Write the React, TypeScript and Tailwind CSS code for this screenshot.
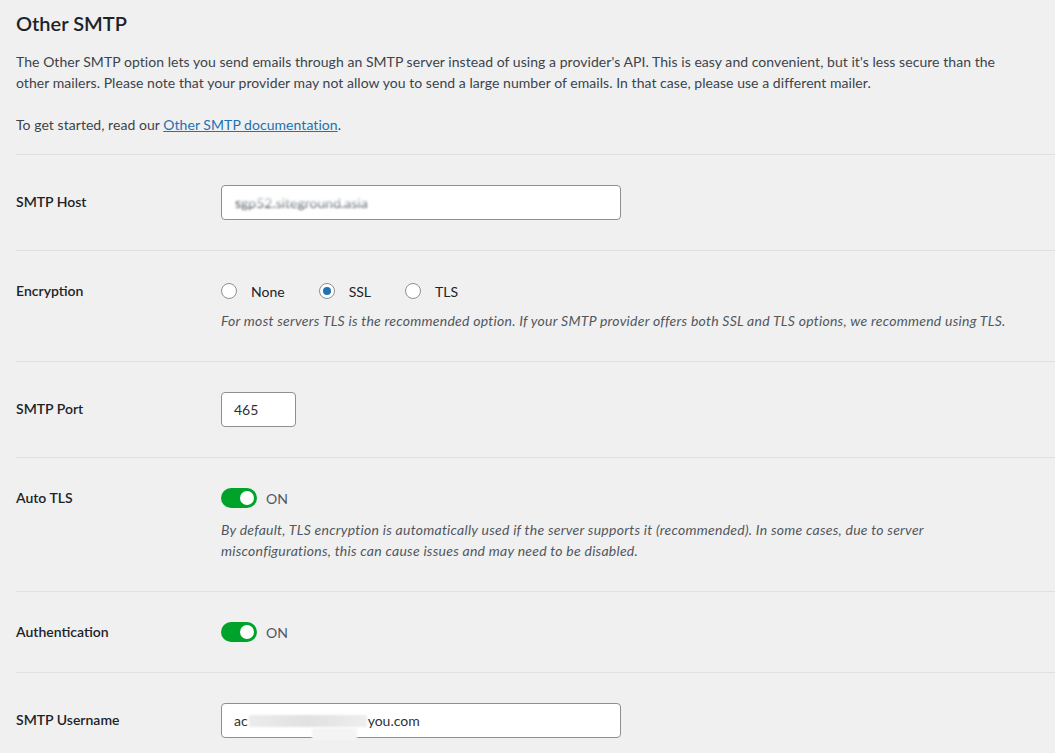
import React from 'react'

const font = { fontFamily: 'Lato, "Noto Sans", "Liberation Sans", sans-serif' }

function Row({ label, top = false, children }: { label: string; top?: boolean; children: React.ReactNode }) {
  return (
    <div className="flex border-t border-[#e0e0e0] py-[30px]">
      <div className={`w-[205px] shrink-0 text-[14px] font-semibold leading-[20px] text-[#1d2327] ${top ? '' : 'pt-[7px]'}`}>
        {label}
      </div>
      <div className="flex-1">{children}</div>
    </div>
  )
}

function Radio({ label, checked }: { label: string; checked?: boolean }) {
  return (
    <label className="flex items-center gap-[14px] text-[14px] text-[#1d2327]">
      <span className="flex h-[16px] w-[16px] items-center justify-center rounded-full border border-[#8c8f94] bg-white">
        {checked && <span className="h-[8px] w-[8px] rounded-full bg-[#2271b1]" />}
      </span>
      {label}
    </label>
  )
}

function Toggle() {
  return (
    <div className="flex h-[20px] items-center gap-[9px]">
      <span className="flex h-[20px] w-[36px] items-center justify-end rounded-full bg-[#00a32a] pr-[3px]">
        <span className="h-[14px] w-[14px] rounded-full bg-white" />
      </span>
      <span className="text-[14px] text-[#50575e]">ON</span>
    </div>
  )
}

export default function App() {
  return (
    <div className="min-h-screen overflow-hidden bg-[#f0f0f1]" style={font}>
      <div className="pl-[16px]">
        <div className="pr-[16px] pt-[10px] pb-[19px]">
          <h2 className="text-[20px] font-semibold leading-[26px] text-[#1d2327]">Other SMTP</h2>
          <p className="mt-[15px] text-[14px] leading-[21px] tracking-[0.05px] text-[#3c434a]">
            The Other SMTP option lets you send emails through an SMTP server instead of using a provider's API. This is easy and convenient, but it's less secure than the
            <br />
            other mailers. Please note that your provider may not allow you to send a large number of emails. In that case, please use a different mailer.
          </p>
          <p className="mt-[21px] text-[14px] leading-[21px] tracking-[0.05px] text-[#3c434a]">
            To get started, read our{' '}
            <a href="#" className="text-[#2271b1] underline">
              Other SMTP documentation
            </a>
            .
          </p>
        </div>

        <Row label="SMTP Host">
          <div className="relative flex h-[35px] w-[400px] items-center overflow-hidden rounded-[4px] border border-[#8c8f94] bg-white px-[13px] text-[14px] text-[#2c3338]">
            <span className="blur-[0.8px] text-[#50575e]">sgp52.siteground.asia</span>
            <span className="absolute left-[20px] top-[7px] h-[11px] w-[125px] bg-white/60 blur-[2px]" />
          </div>
        </Row>

        <Row label="Encryption" top>
          <div className="flex h-[20px] items-center gap-[34px]">
            <Radio label="None" />
            <Radio label="SSL" checked />
            <Radio label="TLS" />
          </div>
          <p className="mt-[9px] text-[14px] italic leading-[21px] tracking-[0.25px] text-[#50575e]">
            For most servers TLS is the recommended option. If your SMTP provider offers both SSL and TLS options, we recommend using TLS.
          </p>
        </Row>

        <Row label="SMTP Port">
          <div className="flex h-[35px] w-[75px] items-center rounded-[4px] border border-[#8c8f94] bg-white px-[12px] text-[14px] text-[#2c3338]">
            465
          </div>
        </Row>

        <Row label="Auto TLS" top>
          <Toggle />
          <p className="mt-[11px] text-[14px] italic leading-[21px] tracking-[0.25px] text-[#50575e]">
            By default, TLS encryption is automatically used if the server supports it (recommended). In some cases, due to server
            <br />
            misconfigurations, this can cause issues and may need to be disabled.
          </p>
        </Row>

        <Row label="Authentication" top>
          <Toggle />
        </Row>

        <Row label="SMTP Username">
          <div className="relative flex h-[35px] w-[400px] items-center rounded-[4px] border border-[#8c8f94] bg-white px-[12px] text-[14px] text-[#2c3338]">
            <span>ac</span>
            <span className="mx-[1px] h-[12px] w-[118px] bg-gradient-to-r from-[#ececec] via-[#e2e0e0] to-[#eeeeee] blur-[1px]" />
            <span>you.com</span>
            <span className="absolute left-[90px] top-[24px] h-[12px] w-[45px] bg-[#f4f4f4] blur-[1px]" />
          </div>
        </Row>
      </div>
    </div>
  )
}
